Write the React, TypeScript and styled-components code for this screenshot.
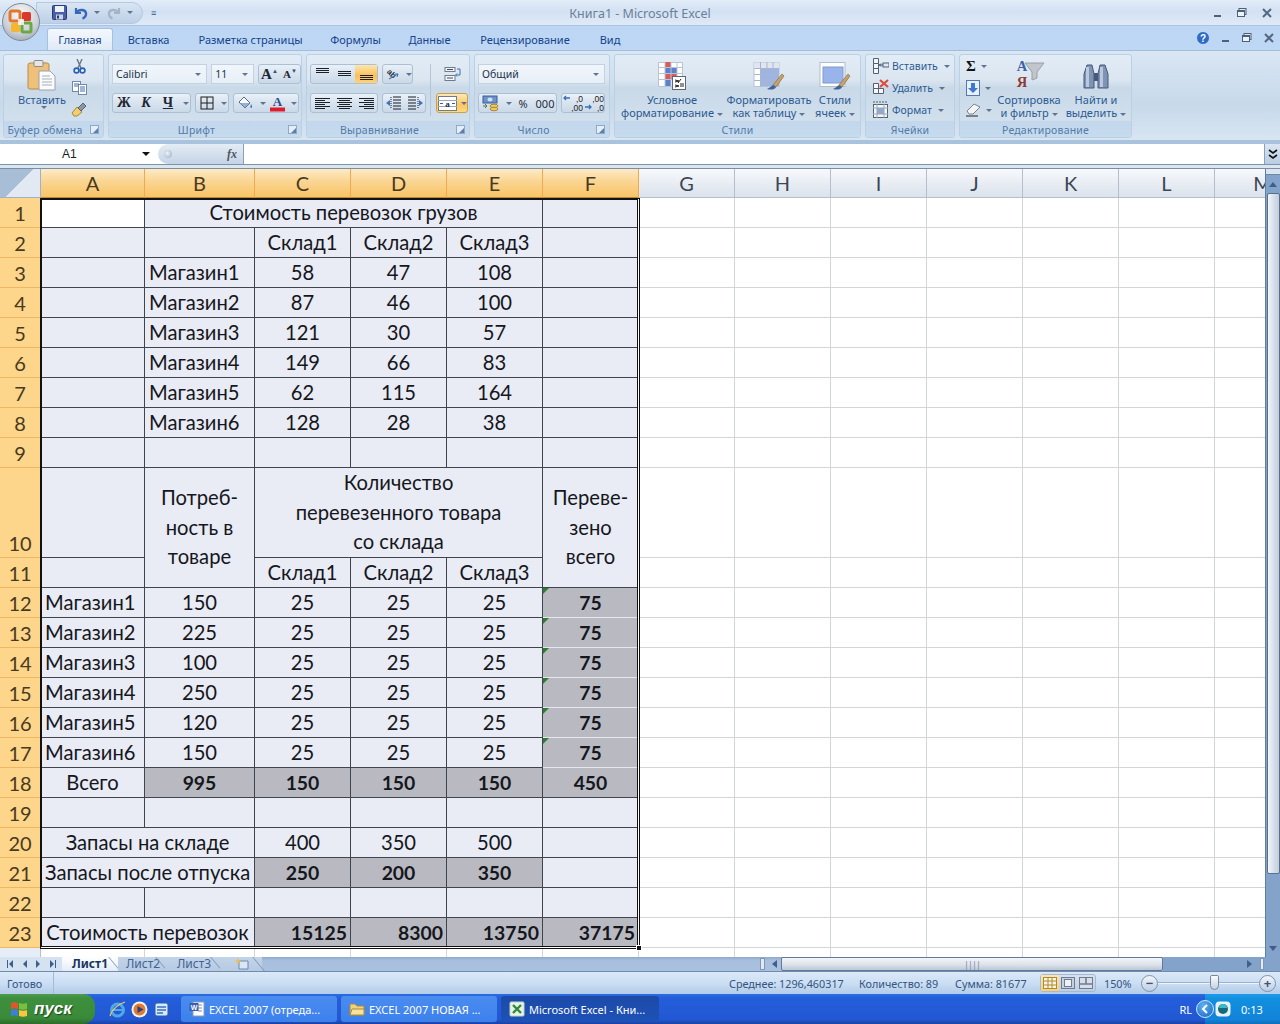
import { ReactNode } from "react";
import styled, { createGlobalStyle } from "styled-components";

const UI_FONT = `"Noto Sans", "Liberation Sans", sans-serif`;
const CELL_FONT = `Lato, "Open Sans", "Noto Sans", sans-serif`;

const GlobalStyle = createGlobalStyle`
  html, body { margin: 0; padding: 0; background: #fff; }
  body { font-family: ${UI_FONT}; font-size: 11px; }
  * { box-sizing: border-box; }
`;

const Page = styled.div`
  width: 1280px;
  height: 1024px;
  display: flex;
  flex-direction: column;
  overflow: hidden;
  position: relative;
  background: #bfd5ec;
`;

/* ---------- title bar ---------- */

const TitleBar = styled.div`
  height: 26px;
  flex: none;
  display: grid;
  grid-template-columns: 1fr auto 1fr;
  align-items: center;
  background: linear-gradient(#e3edf9, #d2e1f3 45%, #dfeaf7);
  border-bottom: 1px solid #a9c3e0;
`;

const Orb = styled.div`
  position: absolute;
  left: 2px;
  top: 3px;
  width: 38px;
  height: 38px;
  border-radius: 50%;
  display: flex;
  align-items: center;
  justify-content: center;
  background: radial-gradient(circle at 50% 30%, #fafbfc, #c9ced6 60%, #8d96a3);
  border: 1px solid #7f8a99;
  z-index: 2;
`;

const Qat = styled.div`
  margin-left: 36px;
  width: 107px;
  height: 22px;
  display: flex;
  align-items: center;
  gap: 3px;
  padding-left: 15px;
  background: linear-gradient(#d9e5f3, #bdd0e7);
  border: 1px solid #b5c9e0;
  border-radius: 0 12px 12px 0;
`;

const QatSpace = styled.span<{ $w: number }>`
  width: ${(p) => p.$w}px;
`;

const QatRow = styled.div`
  display: flex;
  align-items: center;
`;

const QatMenu = styled.span`
  margin-left: 8px;
  color: #36557a;
  font-size: 9px;
  line-height: 1;
`;

const TitleText = styled.div`
  color: #6c7f96;
  font-size: 12.5px;
  padding-top: 1px;
`;

const WindowButtons = styled.div<{ $gap: number; $pad: number }>`
  display: flex;
  align-items: center;
  justify-content: flex-end;
  gap: ${(p) => p.$gap}px;
  padding-right: ${(p) => p.$pad}px;
`;

/* ---------- tabs ---------- */

const TabRow = styled.div`
  height: 24px;
  flex: none;
  display: flex;
  align-items: flex-end;
  padding-left: 47px;
  background: linear-gradient(#bcd6f3, #bdd7f5);
`;

const Tab = styled.div<{ $active?: boolean; $w: number }>`
  width: ${(p) => p.$w}px;
  height: 22px;
  display: flex;
  align-items: center;
  justify-content: center;
  color: #15428b;
  font-size: 11px;
  border-radius: 3px 3px 0 0;
  ${(p) =>
    p.$active &&
    `
    background: linear-gradient(#f4f8fd, #dfeaf6);
    border: 1px solid #a7c1dd;
    border-bottom: none;
  `}
`;

const TabSpacer = styled.div`
  margin-left: auto;
  height: 24px;
  display: flex;
  align-items: center;
`;

/* ---------- ribbon ---------- */

const Ribbon = styled.div`
  height: 90px;
  flex: none;
  display: flex;
  gap: 4px;
  padding: 3px 0 2px 3px;
  background: linear-gradient(#d9e6f4, #c7d9ea 60%, #d8e5f2);
  border-top: 1px solid #a3bed9;
  color: #2b5a92;
`;

const Group = styled.div<{ $w: number }>`
  width: ${(p) => p.$w}px;
  display: flex;
  flex-direction: column;
  border: 1px solid #bcd0e3;
  border-radius: 3px;
  overflow: hidden;
  background: linear-gradient(#e2ecf6, #dbe6f1 30%, #c9d9e8 40%, #d6e3ef);
`;

const GroupBody = styled.div<{ $pad?: string; $col?: boolean; $gap?: number }>`
  flex: 1;
  min-height: 0;
  display: flex;
  flex-direction: ${(p) => (p.$col ? "column" : "row")};
  gap: ${(p) => p.$gap ?? 0}px;
  padding: ${(p) => p.$pad ?? "0"};
`;

const Caption = styled.div<{ $launch?: boolean }>`
  height: 16px;
  flex: none;
  position: relative;
  display: flex;
  align-items: center;
  justify-content: center;
  padding: 2px ${(p) => (p.$launch ? 17 : 0)}px 0 0;
  background: linear-gradient(#c2d7ec, #c7dbee);
  color: #5379a8;
  font-size: 10.5px;
  letter-spacing: 0.2px;
`;

const Launcher = styled.span`
  position: absolute;
  right: 4px;
  top: 4px;
  width: 9px;
  height: 9px;
  border: 1px solid #8fa9c8;
  background: #e5eef8;
  &::after {
    content: "";
    position: absolute;
    right: 0;
    bottom: 0;
    border-bottom: 5px solid #5f7fa8;
    border-left: 5px solid transparent;
  }
`;

const BigButton = styled.div<{ $w: number }>`
  width: ${(p) => p.$w}px;
  flex: none;
  display: flex;
  flex-direction: column;
  align-items: center;
  padding-top: 3px;
  font-size: 11px;
  line-height: 13px;
  text-align: center;
  white-space: nowrap;
`;

const BigIcon = styled.div`
  height: 33px;
  margin-bottom: 2px;
  display: flex;
  align-items: flex-end;
`;

const Drop = styled.span`
  display: inline-block;
  width: 0;
  height: 0;
  margin-left: 3px;
  vertical-align: middle;
  border-left: 3px solid transparent;
  border-right: 3px solid transparent;
  border-top: 3px solid #5f7491;
`;

const ClipColumn = styled.div`
  display: flex;
  flex-direction: column;
  align-items: center;
  width: 12px;
  padding-top: 4px;
  gap: 7px;
`;

const ToolRow = styled.div<{ $gap?: number }>`
  display: flex;
  gap: ${(p) => p.$gap ?? 4}px;
  height: 20px;
`;

const ToolGroup = styled.div<{ $hot?: boolean }>`
  display: flex;
  height: 20px;
  border: 1px solid ${(p) => (p.$hot ? "#c9a04e" : "#abbfd5")};
  border-radius: 3px;
  background: ${(p) =>
    p.$hot
      ? "linear-gradient(#fde9b8, #fbc65f 60%, #fdd986)"
      : "linear-gradient(#e9f0f8, #d8e3ef 50%, #cad9e8)"};
`;

const Tool = styled.div<{ $w: number; $hot?: boolean }>`
  width: ${(p) => p.$w}px;
  display: flex;
  align-items: center;
  justify-content: center;
  color: #1f2d40;
  font-size: 11px;
  ${(p) => p.$hot && "background: linear-gradient(#fde6ae, #fbbf55 60%, #fdd47c);"}
`;

const PlainTool = styled(Tool)`
  height: 20px;
`;

const Letter = styled.span<{ $italic?: boolean; $under?: boolean; $size?: number }>`
  font-family: "Liberation Serif", serif;
  font-weight: 700;
  font-size: ${(p) => p.$size ?? 14}px;
  line-height: 1;
  color: #1d2633;
  font-style: ${(p) => (p.$italic ? "italic" : "normal")};
  text-decoration: ${(p) => (p.$under ? "underline" : "none")};
`;

const Sup = styled.span`
  font-size: 6px;
  color: #31507a;
  align-self: flex-start;
  margin-top: 2px;
`;

const Combo = styled.div<{ $w: number }>`
  width: ${(p) => p.$w}px;
  height: 20px;
  display: flex;
  align-items: center;
  justify-content: space-between;
  padding: 0 5px 0 3px;
  color: #22324a;
  font-size: 10.5px;
  background: linear-gradient(#f1f6fb, #e7eff7);
  border: 1px solid #c3d2e2;
`;

const AlignColumn = styled.div`
  display: flex;
  flex-direction: column;
  gap: 9px;
`;

const VSep = styled.div`
  width: 1px;
  height: 52px;
  margin: 0 5px 0 4px;
  background: #b2c5d9;
`;

const SideColumn = styled.div`
  display: flex;
  flex-direction: column;
  align-items: center;
  gap: 9px;
`;

const CellAction = styled.div`
  height: 22.5px;
  display: flex;
  align-items: center;
  gap: 3px;
  font-size: 10.5px;
  white-space: nowrap;
`;

const EditColumn = styled.div`
  width: 33px;
  flex: none;
  display: flex;
  flex-direction: column;
  align-items: flex-start;
  padding-left: 6px;
`;

const EditItem = styled.div`
  height: 22.5px;
  display: flex;
  align-items: center;
  gap: 2px;
`;

const Sigma = styled.span`
  font-family: "Liberation Serif", serif;
  font-size: 15px;
  font-weight: 700;
  color: #111;
  line-height: 1;
`;

/* ---------- formula bar ---------- */

const FormulaBar = styled.div`
  height: 29px;
  flex: none;
  padding-top: 4px;
  background: #a9c3de;
`;

const FormulaInner = styled.div`
  height: 25px;
  background: linear-gradient(#fff 0 20px, #7e93aa 20px 21px, #dce6f1 21px 24px, #7b8ea3 24px);
  display: flex;
  align-items: flex-start;
`;

const NameBox = styled.div`
  width: 158px;
  height: 20px;
  display: flex;
  align-items: center;
  padding: 0 8px 0 62px;
  justify-content: space-between;
  color: #1c1c1c;
  font-family: "Liberation Sans", sans-serif;
  font-size: 12px;
`;

const BlackDrop = styled.span`
  width: 0;
  height: 0;
  border-left: 4px solid transparent;
  border-right: 4px solid transparent;
  border-top: 4px solid #111;
`;

const FxPill = styled.div`
  width: 86px;
  height: 20px;
  display: flex;
  align-items: center;
  justify-content: space-between;
  padding: 0 6px 0 6px;
  background: linear-gradient(#e4ecf5, #c4d4e6);
  border-right: 1px solid #8aa0b8;
  border-radius: 10px 0 0 10px;
`;

const FxDot = styled.span`
  width: 8px;
  height: 8px;
  border-radius: 50%;
  background: radial-gradient(circle at 40% 40%, #eef2f7, #9aabc0);
`;

const FxLabel = styled.span`
  font-family: "Liberation Serif", serif;
  font-style: italic;
  font-weight: 700;
  font-size: 12px;
  color: #4c5664;
`;

const FormulaSpace = styled.div`
  flex: 1;
`;

const Expand = styled.div`
  width: 16px;
  height: 20px;
  display: flex;
  align-items: center;
  justify-content: center;
  background: linear-gradient(#dbe6f2, #b8cde3);
  border-left: 1px solid #8aa0b8;
  color: #111;
`;

/* ---------- sheet ---------- */

const SheetRow = styled.div`
  height: 788px;
  flex: none;
  display: flex;
  background: #fff;
`;

const SheetClip = styled.div`
  width: 1265px;
  height: 788px;
  overflow: hidden;
  position: relative;
`;

const Grid = styled.table`
  table-layout: fixed;
  border-collapse: separate;
  border-spacing: 0;
  width: 1311px;
  font-family: ${CELL_FONT};
  font-size: 20.2px;
  color: #15171c;
`;

const ColHead = styled.th<{ $on?: boolean }>`
  height: 29px;
  padding: 0;
  font-weight: 400;
  font-size: 20px;
  border-right: 1px solid ${(p) => (p.$on ? "#f0a94b" : "#b4bfcc")};
  border-bottom: 1px solid ${(p) => (p.$on ? "#b98a3e" : "#b4bfcc")};
  color: ${(p) => (p.$on ? "#4a3a1d" : "#3d4654")};
  background: ${(p) =>
    p.$on
      ? "linear-gradient(#fdeac6, #fad592 45%, #f8c467)"
      : "linear-gradient(#f7f9fc, #e6ebf2 60%, #dbe3ec)"};
`;

const Corner = styled.th`
  height: 29px;
  padding: 0;
  border-right: 1px solid #9fb2c7;
  border-bottom: 1px solid #9fb2c7;
  background: linear-gradient(135deg, #a8bed6 0 50%, #e2e9f2 50%);
`;

const RowHead = styled.th<{ $off?: boolean; $low?: boolean }>`
  padding: 0;
  font-weight: 400;
  font-size: 20px;
  line-height: 28px;
  vertical-align: ${(p) => (p.$low ? "bottom" : "middle")};
  color: #4a3a1d;
  background: ${(p) => (p.$off ? "#e6edf6" : "#fdd58b")};
  border-right: 1px solid ${(p) => (p.$off ? "#b4bfcc" : "#111")};
  border-bottom: 1px solid #f1b662;
`;

const Td = styled.td<{
  $h: number;
  $align?: string;
  $bold?: boolean;
  $grey?: boolean;
  $flag?: boolean;
  $white?: boolean;
  $blank?: boolean;
  $multi?: boolean;
}>`
  height: ${(p) => p.$h}px;
  padding: 0 ${(p) => (p.$align === "right" ? 3 : 4)}px 0 4px;
  position: relative;
  line-height: ${(p) => (p.$multi ? 29.6 : 29)}px;
  white-space: nowrap;
  overflow: hidden;
  text-align: ${(p) => p.$align ?? "center"};
  font-weight: ${(p) => (p.$bold ? 700 : 400)};
  font-size: ${(p) => (p.$bold ? "19.4px" : "inherit")};
  background: ${(p) => (p.$blank || p.$white ? "#fff" : p.$grey ? "#b9bac1" : "#e9ebf5")};
  border-right: 1px solid ${(p) => (p.$blank ? "#d3d6d8" : "#3f444d")};
  border-bottom: 1px solid ${(p) => (p.$blank ? "#d3d6d8" : p.$flag ? "#e6e7ee" : "#3f444d")};
  ${(p) =>
    p.$flag &&
    `
    &::before {
      content: "";
      position: absolute;
      left: 0;
      top: 0;
      border-top: 6px solid #2e7d32;
      border-right: 6px solid transparent;
    }
  `}
`;

const Selection = styled.div`
  position: absolute;
  left: 40px;
  top: 29px;
  width: 600px;
  height: 751px;
  border: 1px solid #111;
  box-shadow: inset -1px -1px 0 #fff, inset -2px -2px 0 #111, inset 1px 1px 0 #111;
  pointer-events: none;
`;

const Handle = styled.span`
  position: absolute;
  right: -3px;
  bottom: -3px;
  width: 6px;
  height: 6px;
  background: #111;
  border: 1px solid #fff;
`;

const VScroll = styled.div`
  width: 15px;
  display: flex;
  flex-direction: column;
  align-items: center;
  background: #84a3ca;
  border-left: 1px solid #5f7ea6;
`;

const VSplit = styled.div`
  width: 14px;
  height: 6px;
  background: #dbe5f1;
  border-bottom: 1px solid #6f88a8;
`;

const VArrow = styled.div<{ $down?: boolean }>`
  height: 18px;
  width: 100%;
  display: flex;
  align-items: center;
  justify-content: center;
  flex: none;
  ${(p) => p.$down && "margin-top: auto;"}
`;

const Tri = styled.span<{ $dir: "up" | "down" | "left" | "right"; $c?: string }>`
  width: 0;
  height: 0;
  ${(p) => {
    const c = p.$c ?? "#3f5f8a";
    if (p.$dir === "up") return `border-left:4px solid transparent;border-right:4px solid transparent;border-bottom:5px solid ${c};`;
    if (p.$dir === "down") return `border-left:4px solid transparent;border-right:4px solid transparent;border-top:5px solid ${c};`;
    if (p.$dir === "left") return `border-top:4px solid transparent;border-bottom:4px solid transparent;border-right:5px solid ${c};`;
    return `border-top:4px solid transparent;border-bottom:4px solid transparent;border-left:5px solid ${c};`;
  }}
`;

const VThumb = styled.div`
  width: 13px;
  height: 681px;
  flex: none;
  background: linear-gradient(90deg, #f2f5f9, #d5deea 55%, #c2cedd);
  border: 1px solid #5c6f88;
  border-radius: 2px;
`;

/* ---------- sheet tabs + horizontal scrollbar ---------- */

const TabsBar = styled.div`
  height: 15px;
  flex: none;
  display: flex;
  align-items: stretch;
  background: linear-gradient(#8fa9cb, #a8c0de 25%, #a9c1df);
  border-bottom: 1px solid #6f8bae;
  color: #31507a;
`;

const SheetNav = styled.div`
  width: 62px;
  flex: none;
  display: flex;
  align-items: center;
  justify-content: space-around;
  padding: 0 3px;
  background: #d4e2f2;
`;

const SheetTab = styled.div<{ $active?: boolean; $w: number }>`
  width: ${(p) => p.$w}px;
  flex: none;
  position: relative;
  display: flex;
  align-items: center;
  justify-content: center;
  font-size: 12px;
  line-height: 14px;
  padding-left: ${(p) => (p.$active ? 0 : 3)}px;
  color: ${(p) => (p.$active ? "#17365f" : "#3f6394")};
  font-weight: ${(p) => (p.$active ? 700 : 400)};
  background: ${(p) => (p.$active ? "linear-gradient(#fff, #e4ecf6)" : "linear-gradient(#c3d4e9, #b6cae2)")};
  &::after {
    content: "";
    position: absolute;
    right: 3px;
    top: 0;
    bottom: 0;
    width: 9px;
    border-right: 1px solid #7e97b9;
    transform: skewX(40deg);
  }
`;

const TabFill = styled.div`
  flex: 1;
`;

const HSplit = styled.div`
  width: 5px;
  margin: 1px 3px 1px 0;
  background: #dfe8f3;
  border: 1px solid #7f98b8;
`;

const HArrow = styled.div`
  width: 13px;
  flex: none;
  display: flex;
  align-items: center;
  justify-content: center;
`;

const HThumb = styled.div`
  width: 382px;
  flex: none;
  display: flex;
  align-items: center;
  justify-content: center;
  background: linear-gradient(#f4f6f9, #dbe2ea 55%, #bcc7d5);
  border: 1px solid #63789a;
  border-radius: 2px;
  color: #7a8ba3;
  font-size: 9px;
  letter-spacing: -1px;
`;

const HTrack = styled.div`
  width: 117px;
  flex: none;
  display: flex;
  align-items: center;
  gap: 8px;
  padding-left: 84px;
  background: #84a3ca;
`;

const HEndBox = styled.span`
  width: 4px;
  height: 12px;
  background: #e3ebf5;
  border: 1px solid #7f98b8;
`;

/* ---------- status bar ---------- */

const StatusBar = styled.div`
  height: 22px;
  flex: none;
  display: flex;
  align-items: center;
  background: linear-gradient(#dbe9f8, #cbdef3 50%, #b3cce8);
  color: #33557f;
  font-size: 10.8px;
`;

const StatusReady = styled.div`
  width: 54px;
  height: 100%;
  flex: none;
  display: flex;
  align-items: center;
  padding-left: 7px;
  border-right: 1px solid #a3bbd6;
`;

const StatusInfo = styled.div<{ $w: number }>`
  width: ${(p) => p.$w}px;
  flex: none;
  white-space: nowrap;
`;

const StatusGap = styled.div`
  width: 675px;
  flex: none;
`;

const ViewButtons = styled.div`
  display: flex;
  flex: none;
  height: 18px;
  margin-left: 14px;
  border: 1px solid #a4b9d2;
  border-radius: 3px;
  background: linear-gradient(#d6e2f0, #bfd0e4);
`;

const ViewBtn = styled.div<{ $on?: boolean }>`
  width: 18px;
  display: flex;
  align-items: center;
  justify-content: center;
  ${(p) => p.$on && "background: linear-gradient(#fde6ae, #fbcf75);"}
`;

const Zoom = styled.div`
  width: 37px;
  flex: none;
  margin-left: 8px;
`;

const RoundBtn = styled.div`
  width: 17px;
  height: 17px;
  flex: none;
  border-radius: 50%;
  display: flex;
  align-items: center;
  justify-content: center;
  background: linear-gradient(#f2f6fb, #bccde2);
  border: 1px solid #7e93ad;
  color: #3c5475;
  font-weight: 700;
  font-size: 13px;
  line-height: 1;
`;

const SliderTrack = styled.div`
  width: 101px;
  height: 2px;
  position: relative;
  background: #9db3cd;
  border-bottom: 1px solid #eef4fb;
  flex: none;
`;

const SliderKnob = styled.span`
  position: absolute;
  left: 52px;
  top: -7px;
  width: 9px;
  height: 15px;
  background: linear-gradient(#fafbfd, #c5d2e2);
  border: 1px solid #74899f;
  border-radius: 2px 2px 5px 5px;
`;

/* ---------- taskbar ---------- */

const Taskbar = styled.div`
  height: 30px;
  flex: none;
  display: flex;
  align-items: center;
  background: linear-gradient(#2b6fe0, #245edb 12%, #2257d2 85%, #1941a5);
  color: #fff;
`;

const StartButton = styled.div`
  width: 95px;
  height: 100%;
  flex: none;
  display: flex;
  align-items: center;
  gap: 6px;
  padding-left: 10px;
  background: linear-gradient(#4f9a4f, #3d8f3d 15%, #3a8a3a 80%, #2b6d2b);
  border-radius: 0 12px 12px 0;
  font-family: "Liberation Sans", sans-serif;
  font-style: italic;
  font-weight: 700;
  font-size: 17px;
  text-shadow: 1px 1px 1px #1c4a1c;
`;

const Launch = styled.div`
  width: 86px;
  flex: none;
  display: flex;
  align-items: center;
  justify-content: flex-end;
  gap: 5px;
  padding-right: 11px;
`;

const TaskButton = styled.div<{ $active?: boolean; $w: number }>`
  width: ${(p) => p.$w}px;
  height: 26px;
  flex: none;
  margin-right: 4px;
  display: flex;
  align-items: center;
  gap: 4px;
  padding-left: 8px;
  font-size: 11px;
  white-space: nowrap;
  border-radius: 3px;
  background: ${(p) => (p.$active ? "linear-gradient(#1c4aa8, #1e52b7)" : "linear-gradient(#4a8cf0, #3c80ec)")};
`;

const LangArea = styled.div`
  margin-left: auto;
  font-size: 11px;
  padding-right: 13px;
`;

const Tray = styled.div`
  width: 75px;
  height: 100%;
  flex: none;
  display: flex;
  align-items: center;
  gap: 1px;
  background: linear-gradient(#1e9ce8, #1290e0 15%, #1183d8 85%, #0f6dbb);
  font-size: 11px;
`;

const Chevron = styled.div`
  width: 18px;
  height: 18px;
  margin-left: -9px;
  border-radius: 50%;
  display: flex;
  align-items: center;
  justify-content: center;
  background: radial-gradient(circle at 40% 30%, #5ab2f2, #1a63c4);
  border: 1px solid #cfe6fa;
`;

const Clock = styled.span`
  margin-left: 9px;
`;

/* ---------- icons ---------- */

const WinMin = ({ c = "#4d6078" }: { c?: string }) => (
  <svg width="10" height="10" viewBox="0 0 10 10"><rect x="1" y="7" width="7" height="2" fill={c} /></svg>
);
const WinMax = ({ c = "#4d6078" }: { c?: string }) => (
  <svg width="10" height="10" viewBox="0 0 10 10">
    <rect x="2" y="0.5" width="7" height="6" fill="#dfe9f5" stroke={c} />
    <rect x="0.5" y="2.5" width="7" height="6" fill="#eef3f9" stroke={c} />
    <rect x="0.5" y="2.5" width="7" height="1.5" fill={c} />
  </svg>
);
const WinClose = ({ c = "#55677e" }: { c?: string }) => (
  <svg width="12" height="10" viewBox="0 0 12 10"><path d="M2 1l8 8M10 1L2 9" stroke={c} strokeWidth="2" /></svg>
);

const OrbLogo = () => (
  <svg width="26" height="26" viewBox="0 0 26 26">
    <rect x="2" y="2" width="10" height="10" rx="2" fill="none" stroke="#e2762a" strokeWidth="3" />
    <rect x="14" y="3" width="9" height="9" rx="1.5" fill="#d93a2b" />
    <rect x="3" y="14" width="9" height="9" rx="1.5" fill="#f2b632" />
    <rect x="14" y="14" width="9" height="9" rx="1.5" fill="none" stroke="#6aa842" strokeWidth="3" />
    <rect x="10" y="10" width="6" height="6" fill="#ffffff" opacity="0.8" />
  </svg>
);

const SaveIcon = () => (
  <svg width="15" height="15" viewBox="0 0 15 15">
    <rect x="0.5" y="0.5" width="14" height="14" rx="1" fill="#4a5fa8" stroke="#2c3a72" />
    <rect x="3" y="1" width="9" height="6" fill="#eef2fa" />
    <rect x="4" y="9.5" width="7" height="5" fill="#c9d2e8" />
    <rect x="5" y="10.5" width="2" height="3" fill="#2c3a72" />
  </svg>
);
const UndoIcon = ({ c = "#3866b8" }: { c?: string }) => (
  <svg width="14" height="14" viewBox="0 0 14 14">
    <path d="M2 2v5h5" fill="none" stroke={c} strokeWidth="2.2" />
    <path d="M2.5 6.5C5 3 11 3 12 7c.5 2.5-1.5 5-3.5 5.5" fill="none" stroke={c} strokeWidth="2.4" />
  </svg>
);
const RedoIcon = () => (
  <svg width="14" height="14" viewBox="0 0 14 14">
    <path d="M12 2v5H7" fill="none" stroke="#a5b5c8" strokeWidth="2.2" />
    <path d="M11.5 6.5C9 3 3 3 2 7c-.5 2.5 1.5 5 3.5 5.5" fill="none" stroke="#a5b5c8" strokeWidth="2.4" />
  </svg>
);
const HelpIcon = () => (
  <svg width="14" height="14" viewBox="0 0 14 14">
    <circle cx="7" cy="7" r="6.5" fill="#2f6cc4" stroke="#c8dcf2" />
    <text x="7" y="11" textAnchor="middle" fontSize="10" fontWeight="700" fill="#fff" fontFamily="Liberation Sans">?</text>
  </svg>
);

const PasteIcon = () => (
  <svg width="30" height="32" viewBox="0 0 30 32">
    <rect x="1" y="4" width="21" height="26" rx="2" fill="#eec07a" stroke="#b78b47" />
    <rect x="7" y="1.5" width="9" height="6" rx="1" fill="#e6e6e6" stroke="#8b8b8b" />
    <path d="M12 12h11l5 5v14H12z" fill="#fbfbfb" stroke="#97a2b1" />
    <path d="M15 17h8M15 20h10M15 23h10M15 26h10" stroke="#a3afbf" />
  </svg>
);
const CutIcon = () => (
  <svg width="13" height="15" viewBox="0 0 13 15">
    <path d="M9 0L5 9M4 0l4 9" stroke="#6b7686" strokeWidth="1.4" />
    <circle cx="3.5" cy="11.5" r="2.4" fill="none" stroke="#2c60b0" strokeWidth="1.6" />
    <circle cx="9.5" cy="11.5" r="2.4" fill="none" stroke="#2c60b0" strokeWidth="1.6" />
  </svg>
);
const CopyIcon = () => (
  <svg width="15" height="14" viewBox="0 0 15 14">
    <rect x="0.5" y="0.5" width="8" height="10" fill="#fff" stroke="#7388a8" />
    <rect x="6.5" y="3.5" width="8" height="10" fill="#fff" stroke="#7388a8" />
    <path d="M2 3h5M2 5h4M8 6h5M8 8h5M8 10h5" stroke="#3f6cb0" />
  </svg>
);
const BrushIcon = () => (
  <svg width="16" height="15" viewBox="0 0 16 15">
    <path d="M1 11l5-6 5 5-5 4H3z" fill="#f2cf6c" stroke="#a8873a" />
    <path d="M7 6l5-5 3 3-5 5z" fill="#8b95a5" stroke="#5b6575" />
  </svg>
);

const BordersIcon = () => (
  <svg width="14" height="14" viewBox="0 0 14 14">
    <rect x="1" y="1" width="12" height="12" fill="none" stroke="#1d1d1d" />
    <path d="M7 1v12M1 7h12" stroke="#1d1d1d" />
  </svg>
);
const FillIcon = () => (
  <svg width="15" height="15" viewBox="0 0 15 15">
    <path d="M6 1l6 6-5 5-6-6z" fill="#f6f8fb" stroke="#5d6b7d" />
    <path d="M1 7l6 5 5-5z" fill="#6f8fc4" opacity="0.7" />
    <path d="M13 8c1 2 1.5 3 .5 4-1 .6-1.5-1-.5-4z" fill="#2e6fc0" />
  </svg>
);
const FontColorIcon = () => (
  <svg width="17" height="17" viewBox="0 0 17 17">
    <text x="8.5" y="11" textAnchor="middle" fontSize="13" fontWeight="700" fill="#2c4d86" fontFamily="Liberation Serif">A</text>
    <rect x="1" y="12.5" width="15" height="4" fill="#e01c2c" />
  </svg>
);

const LinesIcon = ({ mode }: { mode: "top" | "mid" | "bot" | "left" | "center" | "right" }) => {
  const rows: [number, number, number][] =
    mode === "top"
      ? [[1, 1, 13], [1, 3, 13], [1, 5, 13]]
      : mode === "mid"
        ? [[1, 4, 13], [1, 6, 13], [1, 8, 13]]
        : mode === "bot"
          ? [[1, 8, 13], [1, 10, 13], [1, 12, 13]]
          : mode === "left"
            ? [[0, 2, 15], [0, 4, 10], [0, 6, 15], [0, 8, 10], [0, 10, 15], [0, 12, 10]]
            : mode === "center"
              ? [[0, 2, 15], [2, 4, 11], [0, 6, 15], [2, 8, 11], [0, 10, 15], [2, 12, 11]]
              : [[0, 2, 15], [5, 4, 10], [0, 6, 15], [5, 8, 10], [0, 10, 15], [5, 12, 10]];
  return (
    <svg width="15" height="14" viewBox="0 0 15 14">
      {rows.map(([x, y, w]) => (
        <rect key={y} x={x} y={y} width={w} height="1" fill="#1a1f28" />
      ))}
    </svg>
  );
};

const OrientIcon = () => (
  <svg width="16" height="16" viewBox="0 0 16 16">
    <text x="2" y="9" fontSize="8" fontWeight="700" fill="#26313f" transform="rotate(45 5 7)" fontFamily="Liberation Sans">ab</text>
    <path d="M4 13l9-5" stroke="#4e74a8" strokeWidth="1.2" />
    <path d="M13 8l-3 0M13 8l-1 3" stroke="#4e74a8" />
  </svg>
);
const IndentIcon = ({ flip }: { flip?: boolean }) => (
  <svg width="16" height="14" viewBox="0 0 16 14">
    <g transform={flip ? "translate(16 0) scale(-1 1)" : undefined}>
      <path d="M7 1h8M7 4h8M7 7h8M7 10h8M7 13h8" stroke="#1a1f28" />
      <path d="M5 1v12" stroke="#1a1f28" strokeDasharray="1 1" />
      <path d="M0 7l4-3v6z" fill="#3c73bd" />
    </g>
  </svg>
);
const WrapIcon = () => (
  <svg width="17" height="17" viewBox="0 0 17 17">
    <rect x="1" y="1.5" width="10" height="4" fill="#f4f6fa" stroke="#6e7b8c" />
    <rect x="1" y="9.5" width="10" height="5" fill="#f4f6fa" stroke="#6e7b8c" />
    <path d="M3 3.5h6M3 12h6" stroke="#3f4a5a" />
    <path d="M13 3h3v6h-4M13 7.5L11.5 9l1.5 1.5" fill="none" stroke="#3d6fb3" />
  </svg>
);
const MergeIcon = () => (
  <svg width="19" height="15" viewBox="0 0 19 15">
    <rect x="0.5" y="0.5" width="18" height="14" fill="#fff" stroke="#6e7b8c" />
    <path d="M0 4.5h19M0 10.5h19" stroke="#9aa5b5" />
    <text x="9.5" y="10.5" textAnchor="middle" fontSize="9" fontWeight="700" fill="#22304a" fontFamily="Liberation Serif">a</text>
    <path d="M2 7.5h3M17 7.5h-3" stroke="#2c60b0" />
  </svg>
);
const CurrencyIcon = () => (
  <svg width="18" height="17" viewBox="0 0 18 17">
    <rect x="1" y="1" width="14" height="7" fill="#6d93c9" stroke="#3a5f99" />
    <ellipse cx="8" cy="4.5" rx="2.5" ry="2" fill="#cfe0f4" />
    <ellipse cx="12" cy="11" rx="4" ry="1.8" fill="#f2c955" stroke="#a8873a" />
    <ellipse cx="12" cy="14" rx="4" ry="1.8" fill="#f2c955" stroke="#a8873a" />
    <path d="M1 11h4M5 11l-2-2M5 11l-2 2" stroke="#4d7a38" />
  </svg>
);
const DecimalIcon = ({ more }: { more?: boolean }) => (
  <svg width="20" height="18" viewBox="0 0 20 18">
    <text x="20" y="7.5" textAnchor="end" fontSize="8.5" fill="#222" fontFamily="Liberation Sans">{more ? ",00" : ",0"}</text>
    <text x="20" y="16.5" textAnchor="end" fontSize="8.5" fill="#222" fontFamily="Liberation Sans">{more ? ",0" : ",00"}</text>
    <path d={more ? "M1 13h6M5 11l2 2-2 2" : "M7 4H1M3 2L1 4l2 2"} stroke="#3d6fb3" strokeWidth="1.3" fill="none" />
  </svg>
);

const ConditionalIcon = () => (
  <svg width="30" height="30" viewBox="0 0 30 30">
    <path d="M1.5 1.5h24v24h-24z" fill="#fff" stroke="#b9c4d2" />
    <rect x="8" y="1" width="6" height="5" fill="#d85a5a" />
    <rect x="8" y="6" width="12" height="6" fill="#5b80cc" />
    <rect x="8" y="12" width="12" height="6" fill="#d85a5a" />
    <rect x="8" y="18" width="6" height="7" fill="#5b80cc" />
    <path d="M1 6.5h25M1 12.5h25M1 18.5h25M8 1v25M14 1v25M20 1v25" stroke="#b9c4d2" />
    <rect x="15.5" y="15.5" width="13" height="13" fill="#fff" stroke="#5e6875" />
    <path d="M18 19l4 1-4 1M24 18l-3 4M18 24l4 1-4 1M23 23h4M23 25h4" stroke="#222" fill="none" />
  </svg>
);
const PaintBrushOverlay = () => (
  <>
    <path d="M29 13L20 24l3 2 8-11z" fill="#c7a36a" stroke="#8c6f3f" strokeWidth="0.7" />
    <path d="M20 24c-2 1-3 3-6 4 3 1 8 1 9-2z" fill="#41639a" />
  </>
);
const TableIcon = () => (
  <svg width="32" height="30" viewBox="0 0 32 30">
    <rect x="1" y="1.5" width="25" height="24" fill="#fff" stroke="#b9c4d2" />
    <rect x="8" y="8" width="18" height="17" fill="#9db5e6" />
    <rect x="1" y="1.5" width="25" height="6" fill="#dfe6f2" />
    <path d="M1 7.5h25M1 13.5h25M1 19.5h25M7.5 1v25M14 1v25M20 1v25" stroke="#a9b6c8" />
    <PaintBrushOverlay />
  </svg>
);
const CellStyleIcon = () => (
  <svg width="32" height="30" viewBox="0 0 32 30">
    <rect x="1" y="1.5" width="25" height="24" fill="#fff" stroke="#b0bccb" />
    <rect x="4" y="6" width="20" height="16" fill="#98b4ea" stroke="#7f9ad0" />
    <PaintBrushOverlay />
  </svg>
);
const InsertCellsIcon = () => (
  <svg width="17" height="18" viewBox="0 0 17 18">
    <path d="M1.5 1.5h5v5h-5zM1.5 6.5h5v5h-5zM1.5 11.5h5v5h-5z" fill="#f3f6fa" stroke="#55606f" />
    <rect x="11" y="6" width="6" height="4" fill="#dfe7f2" stroke="#55606f" />
    <path d="M7 8h4M9 6.5L7.5 8 9 9.5" stroke="#27507f" fill="none" />
  </svg>
);
const DeleteCellsIcon = () => (
  <svg width="17" height="18" viewBox="0 0 17 18">
    <path d="M1.5 4.5h5v5h-5zM1.5 9.5h5v5h-5zM6.5 9.5h5v5h-5z" fill="#f3f6fa" stroke="#55606f" />
    <path d="M8 1l8 7M16 1L8 8" stroke="#de4b3b" strokeWidth="2.2" />
  </svg>
);
const FormatCellsIcon = () => (
  <svg width="17" height="18" viewBox="0 0 17 18">
    <rect x="1.5" y="3.5" width="14" height="13" fill="#f5f7fa" stroke="#55606f" />
    <rect x="5" y="7" width="7" height="6" fill="#8fa9d5" />
    <path d="M1 1h15" stroke="#55606f" strokeDasharray="2 1" />
    <path d="M1 7h15M1 13h15M5 3v14M12 3v14" stroke="#9aa6b5" />
  </svg>
);
const FillDownIcon = () => (
  <svg width="14" height="16" viewBox="0 0 14 16">
    <rect x="0.5" y="0.5" width="13" height="15" fill="#eaf0f8" stroke="#5378b3" />
    <path d="M5 3h4v5h3l-5 5-5-5h3z" fill="#3d78d1" />
  </svg>
);
const EraserIcon = () => (
  <svg width="15" height="14" viewBox="0 0 15 14">
    <path d="M1 8l7-7 6 3-7 7H3z" fill="#f5f5f6" stroke="#79838f" />
    <path d="M0 13h12" stroke="#222" />
  </svg>
);
const SortIcon = () => (
  <svg width="32" height="33" viewBox="0 0 32 33">
    <path d="M12 5h19l-7 9v6l-5 2v-8z" fill="#c2c6cb" stroke="#9a9ea5" />
    <text x="9" y="13" textAnchor="middle" fontSize="14.5" fontWeight="700" fill="#3a62a5" fontFamily="Liberation Serif">А</text>
    <text x="9" y="29" textAnchor="middle" fontSize="14.5" fontWeight="700" fill="#8e3b33" fontFamily="Liberation Serif">Я</text>
  </svg>
);
const FindIcon = () => (
  <svg width="30" height="28" viewBox="0 0 30 28">
    <path d="M3 11l3-9h5l2 9v14H3z" fill="#7f93b5" stroke="#48597a" />
    <path d="M27 11l-3-9h-5l-2 9v14h10z" fill="#7f93b5" stroke="#48597a" />
    <rect x="13" y="10" width="4" height="8" fill="#47597a" />
    <rect x="5" y="4" width="3" height="20" fill="#bcc8dd" />
    <rect x="19" y="4" width="3" height="20" fill="#bcc8dd" />
  </svg>
);

const WindowsFlag = () => (
  <svg width="18" height="18" viewBox="0 0 18 18">
    <path d="M1 3c2-1 4-1 7 0v6C5 8 3 8 1 9z" fill="#e0562c" />
    <path d="M9 3c3 1 5 1 8 0v6c-3 1-5 1-8 0z" fill="#7bbf3f" />
    <path d="M1 10c2-1 4-1 7 0v6c-3-1-5-1-7 0z" fill="#3f7fdc" />
    <path d="M9 10c3 1 5 1 8 0v6c-3 1-5 1-8 0z" fill="#f7c83c" />
  </svg>
);
const IeIcon = () => (
  <svg width="17" height="17" viewBox="0 0 17 17">
    <circle cx="8.5" cy="9" r="6" fill="none" stroke="#4fa8e8" strokeWidth="3" />
    <path d="M2 9h12" stroke="#4fa8e8" strokeWidth="2" />
    <path d="M1 15C3 8 10 3 16 1" fill="none" stroke="#e8c96a" strokeWidth="1.2" />
  </svg>
);
const PlayerIcon = () => (
  <svg width="17" height="17" viewBox="0 0 17 17">
    <circle cx="8.5" cy="8.5" r="8" fill="#f2f2f2" />
    <circle cx="8.5" cy="8.5" r="6" fill="#e07a2c" />
    <path d="M6.5 5l6 3.5-6 3.5z" fill="#2c3f8a" />
  </svg>
);
const DesktopIcon = () => (
  <svg width="17" height="17" viewBox="0 0 17 17">
    <rect x="2" y="2" width="13" height="13" rx="2" fill="#dbe8f6" stroke="#2a5ca8" />
    <path d="M4 6h9M4 9h9M4 12h6" stroke="#3072c4" strokeWidth="1.4" />
  </svg>
);
const WordIcon = () => (
  <svg width="16" height="16" viewBox="0 0 16 16">
    <rect x="4" y="1" width="11" height="14" fill="#fff" stroke="#8d9cb0" />
    <path d="M9 4h4M9 7h4M9 10h4" stroke="#7c8ea5" />
    <rect x="0.5" y="2" width="9" height="8" fill="#3a5fb5" />
    <text x="5" y="9" textAnchor="middle" fontSize="7" fontWeight="700" fill="#fff" fontFamily="Liberation Sans">W</text>
  </svg>
);
const FolderIcon = () => (
  <svg width="16" height="14" viewBox="0 0 16 14">
    <path d="M1 2h5l2 2h7v9H1z" fill="#f0d27a" stroke="#a98a38" />
    <path d="M1 13l2-6h12v6z" fill="#f7e39d" stroke="#a98a38" />
  </svg>
);
const ExcelIcon = () => (
  <svg width="16" height="16" viewBox="0 0 16 16">
    <rect x="1" y="1" width="14" height="14" rx="1" fill="#e8f2e6" stroke="#bcd6c0" />
    <path d="M4 4l8 8M12 4l-8 8" stroke="#2f8a3c" strokeWidth="2.4" />
  </svg>
);
const NetIcon = () => (
  <svg width="16" height="16" viewBox="0 0 16 16">
    <rect x="0.5" y="0.5" width="15" height="15" rx="4" fill="#e8f2f8" />
    <circle cx="8" cy="8" r="5" fill="#156a7e" />
    <path d="M4 7a4 4 0 0 1 8 0z" fill="#3bb9c9" />
  </svg>
);
const ChevronIcon = () => (
  <svg width="8" height="10" viewBox="0 0 8 10"><path d="M6 1L2 5l4 4" stroke="#fff" strokeWidth="2" fill="none" /></svg>
);
const NewSheetIcon = () => (
  <svg width="15" height="12" viewBox="0 0 15 12">
    <path d="M4 3h9v8H4z" fill="#dbe7f4" stroke="#6f89ac" />
    <path d="M3 0l1 2 2 1-2 1-1 2-1-2-2-1 2-1z" fill="#f2bd4a" />
  </svg>
);
const NavIcon = ({ dir, bar }: { dir: "left" | "right"; bar?: boolean }) => (
  <svg width="7" height="8" viewBox="0 0 7 8">
    {dir === "left" ? <path d="M6 0v8L2 4z" fill="#3f5f8a" /> : <path d="M1 0v8l4-4z" fill="#3f5f8a" />}
    {bar && <rect x={dir === "left" ? 0 : 6} y="0" width="1" height="8" fill="#3f5f8a" />}
  </svg>
);
const ViewGridIcon = () => (
  <svg width="14" height="12" viewBox="0 0 14 12">
    <rect x="0.5" y="0.5" width="13" height="11" fill="#fff5dc" stroke="#a98a38" />
    <path d="M0 4h14M0 8h14M5 0v12M9 0v12" stroke="#a98a38" />
  </svg>
);
const ViewPageIcon = () => (
  <svg width="14" height="12" viewBox="0 0 14 12">
    <rect x="0.5" y="0.5" width="13" height="11" fill="#c7d0dc" stroke="#6d7c90" />
    <rect x="3.5" y="2.5" width="7" height="7" fill="#eef1f5" stroke="#6d7c90" />
  </svg>
);
const ViewBreakIcon = () => (
  <svg width="14" height="12" viewBox="0 0 14 12">
    <rect x="0.5" y="0.5" width="13" height="11" fill="#d7dee8" stroke="#6d7c90" />
    <path d="M7 0v7M0 7h14" stroke="#6d7c90" strokeWidth="1.6" />
  </svg>
);

/* ---------- data ---------- */

type Cell = {
  text?: ReactNode;
  col?: number;
  row?: number;
  align?: "left" | "right";
  bold?: boolean;
  grey?: boolean;
  flag?: boolean;
  white?: boolean;
  multi?: boolean;
};

const COLS = ["A", "B", "C", "D", "E", "F", "G", "H", "I", "J", "K", "L", "M"];
const WIDTHS = [104, 110, 96, 96, 96, 96, 96, 96, 96, 96, 96, 96, 96];

const txt = (text: ReactNode): Cell => ({ text });
const sum = (text: ReactNode): Cell => ({ text, bold: true, grey: true });
const total = (text: ReactNode): Cell => ({ text, bold: true, grey: true, align: "right" });
const blank = (n: number): Cell[] => Array.from({ length: n }, () => ({}));

const cost = [
  ["Магазин1", 58, 47, 108],
  ["Магазин2", 87, 46, 100],
  ["Магазин3", 121, 30, 57],
  ["Магазин4", 149, 66, 83],
  ["Магазин5", 62, 115, 164],
  ["Магазин6", 128, 28, 38],
];
const need = [150, 225, 100, 250, 120, 150];

const rows: Cell[][] = [
  [{ white: true }, { text: "Стоимость перевозок грузов", col: 4 }, {}],
  [{}, {}, txt("Склад1"), txt("Склад2"), txt("Склад3"), {}],
  ...cost.map(([name, a, b, c]) => [
    {},
    { text: name, align: "left" as const },
    txt(a),
    txt(b),
    txt(c),
    {},
  ]),
  blank(6),
  [
    {},
    { text: <>Потреб-<br />ность в<br />товаре</>, row: 2, multi: true },
    { text: <>Количество<br />перевезенного товара<br />со склада</>, col: 3, multi: true },
    { text: <>Переве-<br />зено<br />всего</>, row: 2, multi: true },
  ],
  [{}, txt("Склад1"), txt("Склад2"), txt("Склад3")],
  ...need.map((n, i) => [
    { text: `Магазин${i + 1}`, align: "left" as const },
    txt(n),
    txt(25),
    txt(25),
    txt(25),
    { text: 75, bold: true, grey: true, flag: true },
  ]),
  [txt("Всего"), sum(995), sum(150), sum(150), sum(150), sum(450)],
  blank(6),
  [{ text: "Запасы на складе", col: 2 }, txt(400), txt(350), txt(500), {}],
  [{ text: "Запасы после отпуска", col: 2 }, sum(250), sum(200), sum(350), {}],
  blank(6),
  [{ text: "Стоимость перевозок", col: 2 }, total(15125), total(8300), total(13750), total(37175)],
];

const emptyCols = COLS.slice(6);

export default function App() {
  return (
    <Page>
      <GlobalStyle />
      <Orb><OrbLogo /></Orb>

      <TitleBar>
        <QatRow>
          <Qat>
            <SaveIcon />
            <QatSpace $w={1} />
            <UndoIcon />
            <Drop />
            <QatSpace $w={1} />
            <RedoIcon />
            <Drop />
          </Qat>
          <QatMenu>≡</QatMenu>
        </QatRow>
        <TitleText>Книга1 - Microsoft Excel</TitleText>
        <WindowButtons $gap={14} $pad={7}>
          <WinMin />
          <WinMax />
          <WinClose />
        </WindowButtons>
      </TitleBar>

      <TabRow>
        <Tab $active $w={66}>Главная</Tab>
        <Tab $w={71}>Вставка</Tab>
        <Tab $w={133}>Разметка страницы</Tab>
        <Tab $w={77}>Формулы</Tab>
        <Tab $w={71}>Данные</Tab>
        <Tab $w={120}>Рецензирование</Tab>
        <Tab $w={50}>Вид</Tab>
        <TabSpacer>
          <WindowButtons $gap={11} $pad={5}>
            <HelpIcon />
            <WinMin />
            <WinMax />
            <WinClose />
          </WindowButtons>
        </TabSpacer>
      </TabRow>

      <Ribbon>
        <Group $w={101}>
          <GroupBody $pad="0 0 0 7px">
            <BigButton $w={62}>
              <BigIcon><PasteIcon /></BigIcon>
              Вставить
              <Drop />
            </BigButton>
            <ClipColumn>
              <CutIcon />
              <CopyIcon />
              <BrushIcon />
            </ClipColumn>
          </GroupBody>
          <Caption $launch>Буфер обмена<Launcher /></Caption>
        </Group>

        <Group $w={194}>
          <GroupBody $col $gap={9} $pad="9px 0 0 3px">
            <ToolRow>
              <Combo $w={96}>Calibri<Drop /></Combo>
              <Combo $w={43}>11<Drop /></Combo>
              <ToolGroup>
                <Tool $w={21}><Letter $size={15}>A</Letter><Sup>▲</Sup></Tool>
                <Tool $w={20}><Letter $size={11}>A</Letter><Sup>▼</Sup></Tool>
              </ToolGroup>
            </ToolRow>
            <ToolRow>
              <ToolGroup>
                <Tool $w={22}><Letter>Ж</Letter></Tool>
                <Tool $w={22}><Letter $italic>К</Letter></Tool>
                <Tool $w={22}><Letter $under>Ч</Letter></Tool>
                <Tool $w={11}><Drop /></Tool>
              </ToolGroup>
              <ToolGroup>
                <Tool $w={21}><BordersIcon /></Tool>
                <Tool $w={11}><Drop /></Tool>
              </ToolGroup>
              <ToolGroup>
                <Tool $w={22}><FillIcon /></Tool>
                <Tool $w={11}><Drop /></Tool>
                <Tool $w={20}><FontColorIcon /></Tool>
                <Tool $w={11}><Drop /></Tool>
              </ToolGroup>
            </ToolRow>
          </GroupBody>
          <Caption $launch>Шрифт<Launcher /></Caption>
        </Group>

        <Group $w={164}>
          <GroupBody $pad="9px 0 0 3px">
            <AlignColumn>
              <ToolRow>
                <ToolGroup>
                  <Tool $w={22}><LinesIcon mode="top" /></Tool>
                  <Tool $w={22}><LinesIcon mode="mid" /></Tool>
                  <Tool $w={22} $hot><LinesIcon mode="bot" /></Tool>
                </ToolGroup>
                <ToolGroup>
                  <Tool $w={20}><OrientIcon /></Tool>
                  <Tool $w={9}><Drop /></Tool>
                </ToolGroup>
              </ToolRow>
              <ToolRow>
                <ToolGroup>
                  <Tool $w={22}><LinesIcon mode="left" /></Tool>
                  <Tool $w={22}><LinesIcon mode="center" /></Tool>
                  <Tool $w={22}><LinesIcon mode="right" /></Tool>
                </ToolGroup>
                <ToolGroup>
                  <Tool $w={21}><IndentIcon /></Tool>
                  <Tool $w={21}><IndentIcon flip /></Tool>
                </ToolGroup>
              </ToolRow>
            </AlignColumn>
            <VSep />
            <SideColumn>
              <PlainTool $w={30}><WrapIcon /></PlainTool>
              <ToolGroup $hot>
                <Tool $w={20}><MergeIcon /></Tool>
                <Tool $w={10}><Drop /></Tool>
              </ToolGroup>
            </SideColumn>
          </GroupBody>
          <Caption $launch>Выравнивание<Launcher /></Caption>
        </Group>

        <Group $w={136}>
          <GroupBody $col $gap={9} $pad="9px 0 0 3px">
            <Combo $w={127}>Общий<Drop /></Combo>
            <ToolRow>
              <ToolGroup>
                <Tool $w={24}><CurrencyIcon /></Tool>
                <Tool $w={9}><Drop /></Tool>
                <Tool $w={22}>%</Tool>
                <Tool $w={22}>000</Tool>
              </ToolGroup>
              <ToolGroup>
                <Tool $w={21}><DecimalIcon /></Tool>
                <Tool $w={21}><DecimalIcon more /></Tool>
              </ToolGroup>
            </ToolRow>
          </GroupBody>
          <Caption $launch>Число<Launcher /></Caption>
        </Group>

        <Group $w={247}>
          <GroupBody $pad="0 0 0 4px">
            <BigButton $w={106}>
              <BigIcon><ConditionalIcon /></BigIcon>
              Условное
              <span>форматирование<Drop /></span>
            </BigButton>
            <BigButton $w={88}>
              <BigIcon><TableIcon /></BigIcon>
              Форматировать
              <span>как таблицу<Drop /></span>
            </BigButton>
            <BigButton $w={44}>
              <BigIcon><CellStyleIcon /></BigIcon>
              Стили
              <span>ячеек<Drop /></span>
            </BigButton>
          </GroupBody>
          <Caption>Стили</Caption>
        </Group>

        <Group $w={90}>
          <GroupBody $col $pad="0 0 0 6px">
            <CellAction><InsertCellsIcon />Вставить<Drop /></CellAction>
            <CellAction><DeleteCellsIcon />Удалить<Drop /></CellAction>
            <CellAction><FormatCellsIcon />Формат<Drop /></CellAction>
          </GroupBody>
          <Caption>Ячейки</Caption>
        </Group>

        <Group $w={173}>
          <GroupBody>
            <EditColumn>
              <EditItem><Sigma>Σ</Sigma><Drop /></EditItem>
              <EditItem><FillDownIcon /><Drop /></EditItem>
              <EditItem><EraserIcon /><Drop /></EditItem>
            </EditColumn>
            <BigButton $w={72}>
              <BigIcon><SortIcon /></BigIcon>
              Сортировка
              <span>и фильтр<Drop /></span>
            </BigButton>
            <BigButton $w={62}>
              <BigIcon><FindIcon /></BigIcon>
              Найти и
              <span>выделить<Drop /></span>
            </BigButton>
          </GroupBody>
          <Caption>Редактирование</Caption>
        </Group>
      </Ribbon>

      <FormulaBar>
        <FormulaInner>
          <NameBox>A1<BlackDrop /></NameBox>
          <FxPill><FxDot /><FxLabel>fx</FxLabel></FxPill>
          <FormulaSpace />
          <Expand>
            <svg width="10" height="11" viewBox="0 0 10 11">
              <path d="M1 1l4 3 4-3M1 6l4 3 4-3" fill="none" stroke="#111" strokeWidth="1.6" />
            </svg>
          </Expand>
        </FormulaInner>
      </FormulaBar>

      <SheetRow>
        <SheetClip>
          <Grid>
            <colgroup>
              <col width={41} />
              {WIDTHS.map((w, i) => (
                <col key={COLS[i]} width={w} />
              ))}
            </colgroup>
            <thead>
              <tr>
                <Corner />
                {COLS.map((c, i) => (
                  <ColHead key={c} $on={i < 6}>{c}</ColHead>
                ))}
              </tr>
            </thead>
            <tbody>
              {rows.map((cells, r) => {
                const h = r === 9 ? 90 : 30;
                return (
                  <tr key={r}>
                    <RowHead $low={r === 9}>{r + 1}</RowHead>
                    {cells.map((c, i) => (
                      <Td
                        key={i}
                        $h={h}
                        colSpan={c.col}
                        rowSpan={c.row}
                        $align={c.align}
                        $bold={c.bold}
                        $grey={c.grey}
                        $flag={c.flag}
                        $white={c.white}
                        $multi={c.multi}
                      >
                        {c.text}
                      </Td>
                    ))}
                    {emptyCols.map((c) => (
                      <Td key={c} $h={h} $blank />
                    ))}
                  </tr>
                );
              })}
              <tr>
                <RowHead $off />
                {COLS.map((c) => (
                  <Td key={c} $h={30} $blank />
                ))}
              </tr>
            </tbody>
          </Grid>
          <Selection><Handle /></Selection>
        </SheetClip>
        <VScroll>
          <VSplit />
          <VArrow><Tri $dir="up" /></VArrow>
          <VThumb />
          <VArrow $down><Tri $dir="down" /></VArrow>
        </VScroll>
      </SheetRow>

      <TabsBar>
        <SheetNav>
          <NavIcon dir="left" bar />
          <NavIcon dir="left" />
          <NavIcon dir="right" />
          <NavIcon dir="right" bar />
        </SheetNav>
        <SheetTab $active $w={56}>Лист1</SheetTab>
        <SheetTab $w={47}>Лист2</SheetTab>
        <SheetTab $w={55}>Лист3</SheetTab>
        <SheetTab $w={42}><NewSheetIcon /></SheetTab>
        <TabFill />
        <HSplit />
        <HArrow><Tri $dir="left" /></HArrow>
        <HThumb>||||</HThumb>
        <HTrack>
          <Tri $dir="right" />
          <HEndBox />
        </HTrack>
      </TabsBar>

      <StatusBar>
        <StatusReady>Готово</StatusReady>
        <StatusGap />
        <StatusInfo $w={130}>Среднее: 1296,460317</StatusInfo>
        <StatusInfo $w={96}>Количество: 89</StatusInfo>
        <StatusInfo $w={71}>Сумма: 81677</StatusInfo>
        <ViewButtons>
          <ViewBtn $on><ViewGridIcon /></ViewBtn>
          <ViewBtn><ViewPageIcon /></ViewBtn>
          <ViewBtn><ViewBreakIcon /></ViewBtn>
        </ViewButtons>
        <Zoom>150%</Zoom>
        <RoundBtn>−</RoundBtn>
        <SliderTrack><SliderKnob /></SliderTrack>
        <RoundBtn>+</RoundBtn>
      </StatusBar>

      <Taskbar>
        <StartButton><WindowsFlag />пуск</StartButton>
        <Launch>
          <IeIcon />
          <PlayerIcon />
          <DesktopIcon />
        </Launch>
        <TaskButton $w={156}><WordIcon />EXCEL 2007 (отреда...</TaskButton>
        <TaskButton $w={156}><FolderIcon />EXCEL 2007 НОВАЯ ...</TaskButton>
        <TaskButton $active $w={158}><ExcelIcon />Microsoft Excel - Кни...</TaskButton>
        <LangArea>RL</LangArea>
        <Tray>
          <Chevron><ChevronIcon /></Chevron>
          <NetIcon />
          <Clock>0:13</Clock>
        </Tray>
      </Taskbar>
    </Page>
  );
}
